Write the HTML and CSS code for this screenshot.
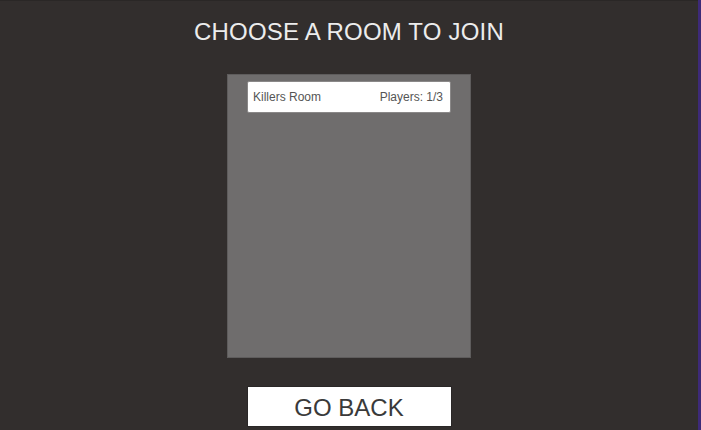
FILE: index.html
```html
<!DOCTYPE html>
<html lang="en">
<head>
    <meta charset="UTF-8">
    <title>Choose a room</title>
    <link rel="stylesheet" href="styles.css">
</head>
<body>
    <div class="screen">
        <h1 class="title">CHOOSE A ROOM TO JOIN</h1>
        <div class="room-list">
            <div class="room">
                <span class="room-name">Killers Room</span>
                <span class="room-players">Players: 1/3</span>
            </div>
        </div>
        <button class="back">GO BACK</button>
    </div>
</body>
</html>
```

FILE: styles.css
```css
* {
    box-sizing: border-box;
    font-family: "Liberation Sans", Arial, sans-serif;
}
body {
    margin: 0;
    height: 430px;
    background: #322e2d;
    border-right: 3px solid #3d2a78;
    overflow: hidden;
}
.screen {
    display: flex;
    flex-direction: column;
    align-items: center;
    height: 100%;
    border-top: 1px solid #2a2726;
}
.title {
    margin: 17px 0 0;
    font-size: 24px;
    font-weight: 400;
    color: #ececec;
    letter-spacing: 0.2px;
}
.room-list {
    margin-top: 28px;
    width: 244px;
    height: 284px;
    background: #6f6d6d;
    border: 1px solid #5e5c5c;
    padding: 6px 19px;
}
.room {
    display: flex;
    justify-content: space-between;
    align-items: center;
    height: 32px;
    padding: 0 7px 0 5px;
    background: #ffffff;
    border: 1px solid #8a8888;
    border-radius: 2px;
    font-size: 12px;
    color: #555;
}
.back {
    margin-top: 28px;
    width: 205px;
    height: 41px;
    background: #ffffff;
    border: 1px solid #2a2727;
    border-radius: 0;
    font-size: 24px;
    color: #3a3a3a;
    padding: 2px 0 0;
}
```
